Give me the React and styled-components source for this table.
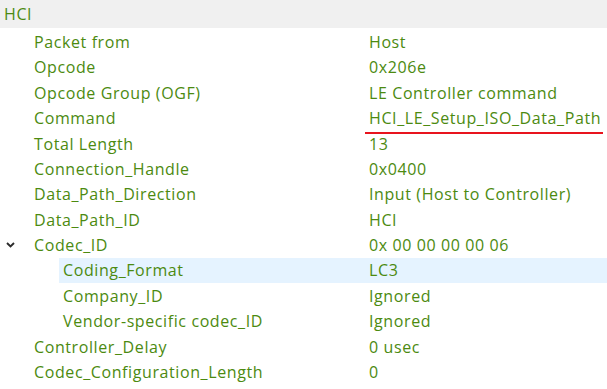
import React from "react";
import styled, { createGlobalStyle } from "styled-components";

const Global = createGlobalStyle`
  html, body { margin: 0; padding: 0; background: #ffffff; }
  body { font-family: "Open Sans", "Noto Sans", sans-serif; }
`;

const Tree = styled.div`
  width: 607px;
  height: 389px;
  overflow: hidden;
  background: #ffffff;
  color: #4c8a10;
  font-size: 16px;
  letter-spacing: 0.6px;
`;

const Header = styled.div`
  height: 28px;
  display: flex;
  align-items: center;
  padding-left: 4px;
  background: #f0f0f0;
  margin-bottom: 1.4px;
`;

const Row = styled.div`
  height: 25.38px;
  display: grid;
  grid-template-columns: ${(p) => (p.$selected ? "310px" : "369px")} 1fr;
  align-items: center;
  background: ${(p) => (p.$selected ? "#e5f3ff" : "transparent")};
  margin-left: ${(p) => (p.$selected ? "59px" : "0")};
`;

const LabelWrap = styled.div`
  position: relative;
  display: flex;
  align-items: center;
`;

const Label = styled.div`
  padding-left: ${(p) => p.$indent}px;
  white-space: nowrap;
`;

const Value = styled.div`
  position: relative;
  white-space: nowrap;
  justify-self: start;
`;

const Underline = styled.span`
  position: absolute;
  left: -4px;
  right: -2px;
  bottom: -5px;
  height: 2px;
  background: #e8141e;
`;

const Chevron = styled.svg`
  position: absolute;
  left: 6px;
  top: 50%;
  margin-top: -3px;
  width: 9px;
  height: 6px;
`;

const rows = [
  { l: "Packet from", v: "Host", d: 1 },
  { l: "Opcode", v: "0x206e", d: 1 },
  { l: "Opcode Group (OGF)", v: "LE Controller command", d: 1 },
  { l: "Command", v: "HCI_LE_Setup_ISO_Data_Path", d: 1, mark: true },
  { l: "Total Length", v: "13", d: 1 },
  { l: "Connection_Handle", v: "0x0400", d: 1 },
  { l: "Data_Path_Direction", v: "Input (Host to Controller)", d: 1 },
  { l: "Data_Path_ID", v: "HCI", d: 1 },
  { l: "Codec_ID", v: "0x 00 00 00 00 06", d: 1, open: true },
  { l: "Coding_Format", v: "LC3", d: 2, sel: true },
  { l: "Company_ID", v: "Ignored", d: 2 },
  { l: "Vendor-specific codec_ID", v: "Ignored", d: 2 },
  { l: "Controller_Delay", v: "0 usec", d: 1 },
  { l: "Codec_Configuration_Length", v: "0", d: 1 },
];

export default function App() {
  return (
    <>
      <Global />
      <Tree>
        <Header>HCI</Header>
        {rows.map((r) => (
          <Row key={r.l} $selected={r.sel}>
            <LabelWrap>
              {r.open && (
                <Chevron viewBox="0 0 9 6">
                  <path d="M1 1 L4.5 4.5 L8 1" fill="none" stroke="#2b2b2b" strokeWidth="1.9" />
                </Chevron>
              )}
              <Label $indent={r.sel ? 4 : r.d === 1 ? 34 : 63}>{r.l}</Label>
            </LabelWrap>
            <Value>
              {r.v}
              {r.mark && <Underline />}
            </Value>
          </Row>
        ))}
      </Tree>
    </>
  );
}
